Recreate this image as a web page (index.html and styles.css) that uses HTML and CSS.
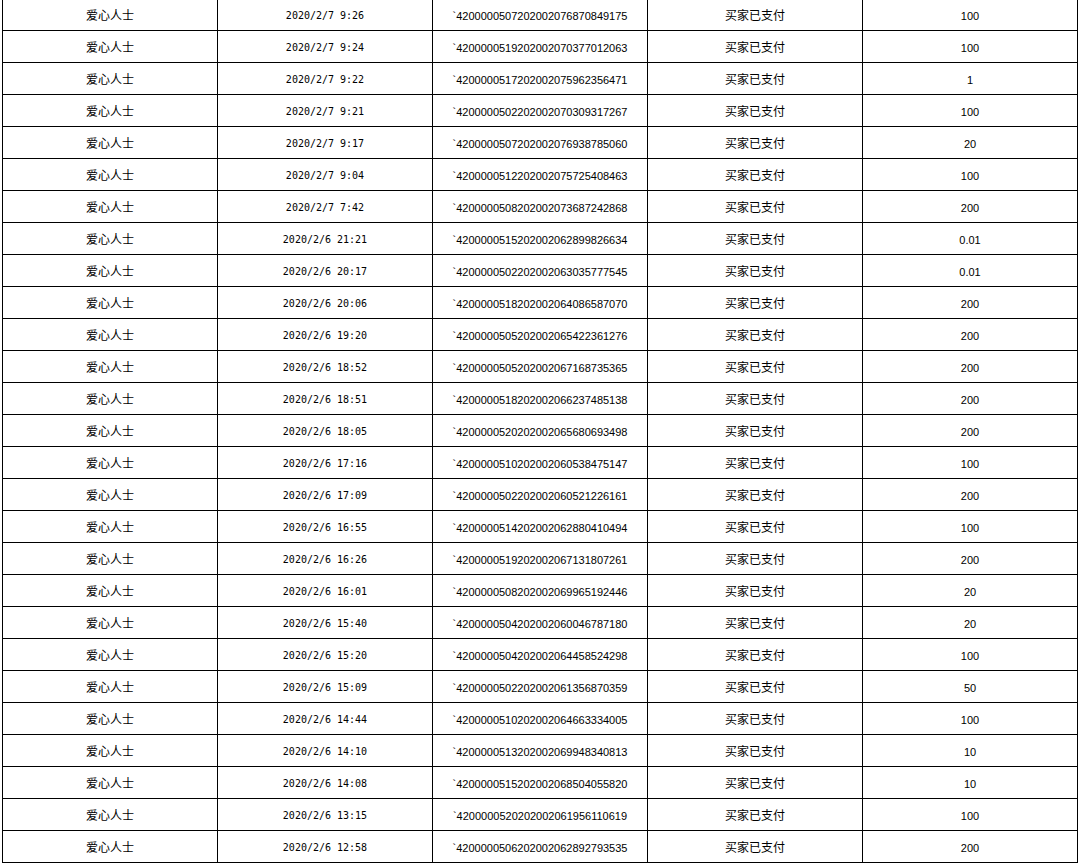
FILE: index.html
```html
<!DOCTYPE html>
<html lang="zh-CN">
<head>
<meta charset="utf-8">
<title>捐款记录</title>
<link rel="stylesheet" href="styles.css">
</head>
<body>
<table class="records">
<colgroup><col><col><col><col><col></colgroup>
<tbody>
<tr><td class="cjk">爱心人士</td><td class="date">2020/2/7 9:26</td><td class="num">`4200000507202002076870849175</td><td class="cjk">买家已支付</td><td class="num">100</td></tr>
<tr><td class="cjk">爱心人士</td><td class="date">2020/2/7 9:24</td><td class="num">`4200000519202002070377012063</td><td class="cjk">买家已支付</td><td class="num">100</td></tr>
<tr><td class="cjk">爱心人士</td><td class="date">2020/2/7 9:22</td><td class="num">`4200000517202002075962356471</td><td class="cjk">买家已支付</td><td class="num">1</td></tr>
<tr><td class="cjk">爱心人士</td><td class="date">2020/2/7 9:21</td><td class="num">`4200000502202002070309317267</td><td class="cjk">买家已支付</td><td class="num">100</td></tr>
<tr><td class="cjk">爱心人士</td><td class="date">2020/2/7 9:17</td><td class="num">`4200000507202002076938785060</td><td class="cjk">买家已支付</td><td class="num">20</td></tr>
<tr><td class="cjk">爱心人士</td><td class="date">2020/2/7 9:04</td><td class="num">`4200000512202002075725408463</td><td class="cjk">买家已支付</td><td class="num">100</td></tr>
<tr><td class="cjk">爱心人士</td><td class="date">2020/2/7 7:42</td><td class="num">`4200000508202002073687242868</td><td class="cjk">买家已支付</td><td class="num">200</td></tr>
<tr><td class="cjk">爱心人士</td><td class="date">2020/2/6 21:21</td><td class="num">`4200000515202002062899826634</td><td class="cjk">买家已支付</td><td class="num">0.01</td></tr>
<tr><td class="cjk">爱心人士</td><td class="date">2020/2/6 20:17</td><td class="num">`4200000502202002063035777545</td><td class="cjk">买家已支付</td><td class="num">0.01</td></tr>
<tr><td class="cjk">爱心人士</td><td class="date">2020/2/6 20:06</td><td class="num">`4200000518202002064086587070</td><td class="cjk">买家已支付</td><td class="num">200</td></tr>
<tr><td class="cjk">爱心人士</td><td class="date">2020/2/6 19:20</td><td class="num">`4200000505202002065422361276</td><td class="cjk">买家已支付</td><td class="num">200</td></tr>
<tr><td class="cjk">爱心人士</td><td class="date">2020/2/6 18:52</td><td class="num">`4200000505202002067168735365</td><td class="cjk">买家已支付</td><td class="num">200</td></tr>
<tr><td class="cjk">爱心人士</td><td class="date">2020/2/6 18:51</td><td class="num">`4200000518202002066237485138</td><td class="cjk">买家已支付</td><td class="num">200</td></tr>
<tr><td class="cjk">爱心人士</td><td class="date">2020/2/6 18:05</td><td class="num">`4200000520202002065680693498</td><td class="cjk">买家已支付</td><td class="num">200</td></tr>
<tr><td class="cjk">爱心人士</td><td class="date">2020/2/6 17:16</td><td class="num">`4200000510202002060538475147</td><td class="cjk">买家已支付</td><td class="num">100</td></tr>
<tr><td class="cjk">爱心人士</td><td class="date">2020/2/6 17:09</td><td class="num">`4200000502202002060521226161</td><td class="cjk">买家已支付</td><td class="num">200</td></tr>
<tr><td class="cjk">爱心人士</td><td class="date">2020/2/6 16:55</td><td class="num">`4200000514202002062880410494</td><td class="cjk">买家已支付</td><td class="num">100</td></tr>
<tr><td class="cjk">爱心人士</td><td class="date">2020/2/6 16:26</td><td class="num">`4200000519202002067131807261</td><td class="cjk">买家已支付</td><td class="num">200</td></tr>
<tr><td class="cjk">爱心人士</td><td class="date">2020/2/6 16:01</td><td class="num">`4200000508202002069965192446</td><td class="cjk">买家已支付</td><td class="num">20</td></tr>
<tr><td class="cjk">爱心人士</td><td class="date">2020/2/6 15:40</td><td class="num">`4200000504202002060046787180</td><td class="cjk">买家已支付</td><td class="num">20</td></tr>
<tr><td class="cjk">爱心人士</td><td class="date">2020/2/6 15:20</td><td class="num">`4200000504202002064458524298</td><td class="cjk">买家已支付</td><td class="num">100</td></tr>
<tr><td class="cjk">爱心人士</td><td class="date">2020/2/6 15:09</td><td class="num">`4200000502202002061356870359</td><td class="cjk">买家已支付</td><td class="num">50</td></tr>
<tr><td class="cjk">爱心人士</td><td class="date">2020/2/6 14:44</td><td class="num">`4200000510202002064663334005</td><td class="cjk">买家已支付</td><td class="num">100</td></tr>
<tr><td class="cjk">爱心人士</td><td class="date">2020/2/6 14:10</td><td class="num">`4200000513202002069948340813</td><td class="cjk">买家已支付</td><td class="num">10</td></tr>
<tr><td class="cjk">爱心人士</td><td class="date">2020/2/6 14:08</td><td class="num">`4200000515202002068504055820</td><td class="cjk">买家已支付</td><td class="num">10</td></tr>
<tr><td class="cjk">爱心人士</td><td class="date">2020/2/6 13:15</td><td class="num">`4200000520202002061956110619</td><td class="cjk">买家已支付</td><td class="num">100</td></tr>
<tr><td class="cjk">爱心人士</td><td class="date">2020/2/6 12:58</td><td class="num">`4200000506202002062892793535</td><td class="cjk">买家已支付</td><td class="num">200</td></tr>
</tbody>
</table>
</body>
</html>
```

FILE: styles.css
```css
html, body {
  margin: 0;
  padding: 0;
  background: #ffffff;
}

.records {
  width: 1076px;
  margin: -2px 0 0 2px;
  border-collapse: collapse;
  table-layout: fixed;
  color: #000000;
}

.records td {
  height: 29px;
  padding: 2px 0 0;
  border: 1px solid #000000;
  text-align: center;
  vertical-align: middle;
  white-space: nowrap;
  line-height: 14px;
}

.records td.cjk {
  height: 30px;
  padding-top: 1px;
  font-family: "Noto Sans CJK SC", "Liberation Sans", sans-serif;
  font-size: 12px;
}

.date {
  font-family: "DejaVu Sans Mono", monospace;
  font-size: 10px;
}

.num {
  font-family: "Liberation Sans", "DejaVu Sans", sans-serif;
  font-size: 11px;
}
```
